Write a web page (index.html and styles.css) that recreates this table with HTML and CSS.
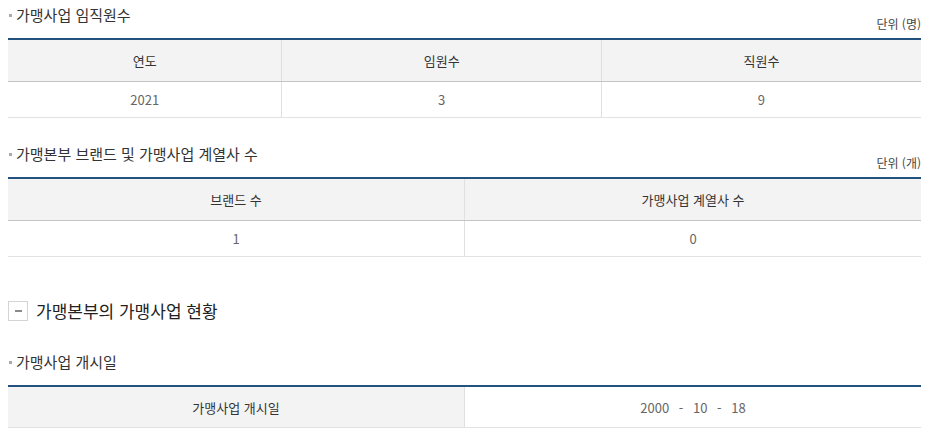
FILE: index.html
```html
<!DOCTYPE html>
<html lang="ko">
<head>
<meta charset="utf-8">
<link rel="stylesheet" href="styles.css">
</head>
<body>
<div class="wrap">
  <div class="tit-row">
    <h4 class="tit">가맹사업 임직원수</h4>
    <span class="unit">단위 (명)</span>
  </div>
  <table class="tbl">
    <colgroup><col class="c30"><col class="c35"><col></colgroup>
    <thead><tr><th>연도</th><th>임원수</th><th>직원수</th></tr></thead>
    <tbody><tr><td>2021</td><td>3</td><td>9</td></tr></tbody>
  </table>

  <div class="tit-row sec2">
    <h4 class="tit">가맹본부 브랜드 및 가맹사업 계열사 수</h4>
    <span class="unit">단위 (개)</span>
  </div>
  <table class="tbl">
    <colgroup><col class="c50"><col></colgroup>
    <thead><tr><th>브랜드 수</th><th>가맹사업 계열사 수</th></tr></thead>
    <tbody><tr><td>1</td><td>0</td></tr></tbody>
  </table>

  <div class="sec-head">
    <span class="toggle"><span class="minus"></span></span>
    <h3 class="sec-tit">가맹본부의 가맹사업 현황</h3>
  </div>

  <div class="tit-row sec3">
    <h4 class="tit">가맹사업 개시일</h4>
  </div>
  <table class="tbl row-tbl">
    <colgroup><col class="c50"><col></colgroup>
    <tbody><tr><th>가맹사업 개시일</th><td class="date">2000 - 10 - 18</td></tr></tbody>
  </table>
</div>
</body>
</html>
```
FILE: styles.css
```css
html, body { margin: 0; padding: 0; background: #fff; }
body {
  font-family: "Noto Sans CJK KR", "Noto Sans", sans-serif;
  color: #333;
}
.wrap { width: 913px; margin: 0 0 0 8px; }
.tit-row {
  display: flex;
  justify-content: space-between;
  align-items: flex-end;
  height: 38px;
}
.tit {
  margin: 0;
  align-self: flex-start;
  padding-top: 3px;
  font-size: 15px;
  font-weight: 400;
  line-height: 24px;
  color: #333;
  display: flex;
  align-items: center;
}
.tit::before {
  content: "";
  width: 3px;
  height: 3px;
  background: #aaa;
  margin: 0 4px 0 1px;
}
.unit {
  font-size: 12px;
  line-height: 16px;
  color: #444;
  padding-bottom: 6px;
}
.sec2 { margin-top: 21px; height: 38px; }
.tbl {
  width: 100%;
  border-collapse: collapse;
  table-layout: fixed;
  border-top: 2px solid #24527f;
  font-size: 13px;
}
.c30 { width: 30%; }
.c35 { width: 35%; }
.c50 { width: 50%; }
.tbl th {
  background: #f3f3f3;
  font-weight: 400;
  color: #333;
  height: 41px;
  padding: 0;
  border-bottom: 1px solid #c4c4c4;
  border-left: 1px solid #e0e0e0;
}
.tbl td {
  text-align: center;
  color: #666;
  height: 35px;
  padding: 0;
  border-bottom: 1px solid #e2e2e2;
  border-left: 1px solid #e0e0e0;
}
.tbl tr > :first-child { border-left: 0; }
.sec-head {
  display: flex;
  align-items: center;
  margin-top: 44px;
  height: 20px;
}
.toggle {
  width: 18px;
  height: 18px;
  border: 1px solid #d4d4d4;
  display: flex;
  align-items: center;
  justify-content: center;
  margin-right: 8px;
}
.minus { width: 7px; height: 2px; background: #8a8a8a; }
.sec-tit {
  margin: 0;
  font-size: 17px;
  font-weight: 400;
  color: #222;
  line-height: 20px;
}
.sec3 { margin-top: 26px; height: 38px; }
.row-tbl th { height: 40px; border-bottom: 1px solid #e2e2e2; }
.row-tbl td { height: 40px; border-left: 1px solid #e0e0e0; }
.row-tbl tr > td:last-child { border-left: 1px solid #e0e0e0; }
.date { word-spacing: 6px; }
```
